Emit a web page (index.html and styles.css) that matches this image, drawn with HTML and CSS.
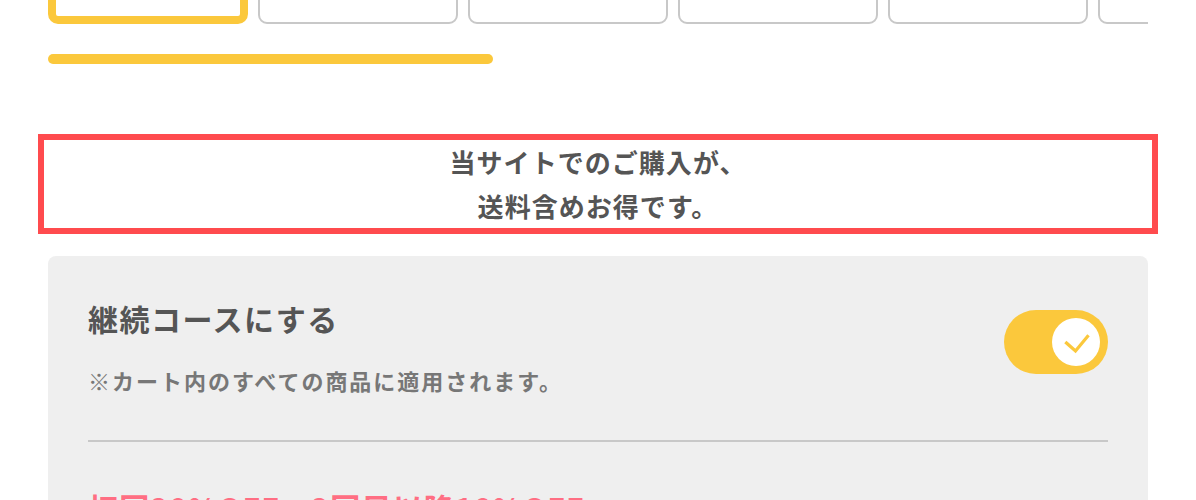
FILE: index.html
```html
<!DOCTYPE html>
<html lang="ja">
<head>
<meta charset="utf-8">
<title>継続コース</title>
<link rel="stylesheet" href="styles.css">
</head>
<body>
<div class="page">
  <div class="tabs">
    <div class="tab tab-active"></div>
    <div class="tab"></div>
    <div class="tab"></div>
    <div class="tab"></div>
    <div class="tab"></div>
    <div class="tab"></div>
  </div>
  <div class="track"><div class="thumb"></div></div>

  <div class="notice">
    <p>当サイトでのご購入が、</p>
    <p>送料含めお得です。</p>
  </div>

  <div class="panel">
    <div class="course-row">
      <div class="course-text">
        <div class="course-title">継続コースにする</div>
        <div class="course-note">※カート内のすべての商品に適用されます。</div>
      </div>
      <div class="toggle">
        <div class="knob">
          <svg viewBox="0 0 48 48" width="48" height="48">
            <path d="M14.5 25 L23.5 33 L35.5 18.5" fill="none" stroke="#fbc83c" stroke-width="3.2" stroke-linecap="square"/>
          </svg>
        </div>
      </div>
    </div>
    <div class="offer">初回20%OFF、2回目以降10%OFF</div>
  </div>
</div>
</body>
</html>
```

FILE: styles.css
```css
html, body {
  margin: 0;
  padding: 0;
  background: #ffffff;
}
body {
  font-family: "Noto Sans CJK JP", "Noto Sans", sans-serif;
  color: #555555;
}
.page {
  padding: 0 48px;
  overflow: hidden;
  height: 500px;
}
.tabs {
  display: flex;
  gap: 10px;
  margin-top: -56px;
  overflow: hidden;
}
.tab {
  flex: 0 0 200px;
  height: 80px;
  box-sizing: border-box;
  border: 2px solid #c8c8c8;
  border-radius: 9px;
  background: #fff;
}
.tab-active {
  border: 8px solid #fbc83c;
  border-radius: 10px;
}
.track {
  margin-top: 30px;
  height: 10px;
}
.thumb {
  width: 445px;
  height: 10px;
  border-radius: 5px;
  background: #fbc83c;
}
.notice {
  margin: 70px -10px 0;
  border: 6px solid #ff4b4e;
  text-align: center;
  font-weight: 700;
  font-size: 26px;
  letter-spacing: 0.04em;
  line-height: 44px;
  color: #555;
}
.notice p {
  margin: 0;
}
.panel {
  margin-top: 22px;
  background: #efefef;
  border-radius: 8px;
  padding: 0 40px;
}
.course-row {
  display: flex;
  align-items: flex-start;
  justify-content: space-between;
  padding: 40px 0 44px;
  border-bottom: 2px solid #c8c8c8;
}
.course-title {
  font-size: 30px;
  font-weight: 700;
  letter-spacing: 0.05em;
  line-height: 45px;
  color: #555;
}
.course-note {
  margin-top: 23px;
  font-size: 22px;
  font-weight: 700;
  letter-spacing: 0.09em;
  line-height: 32px;
  color: #777;
}
.toggle {
  margin-top: 14px;
  width: 104px;
  height: 64px;
  border-radius: 32px;
  background: #fbc83c;
  display: flex;
  align-items: center;
  justify-content: flex-end;
  padding-right: 8px;
  box-sizing: border-box;
}
.knob {
  width: 48px;
  height: 48px;
  border-radius: 50%;
  background: #fff;
  display: flex;
}
.offer {
  padding-top: 44px;
  font-size: 30px;
  font-weight: 700;
  letter-spacing: 0.04em;
  line-height: 42px;
  color: #ff6e83;
}
```
